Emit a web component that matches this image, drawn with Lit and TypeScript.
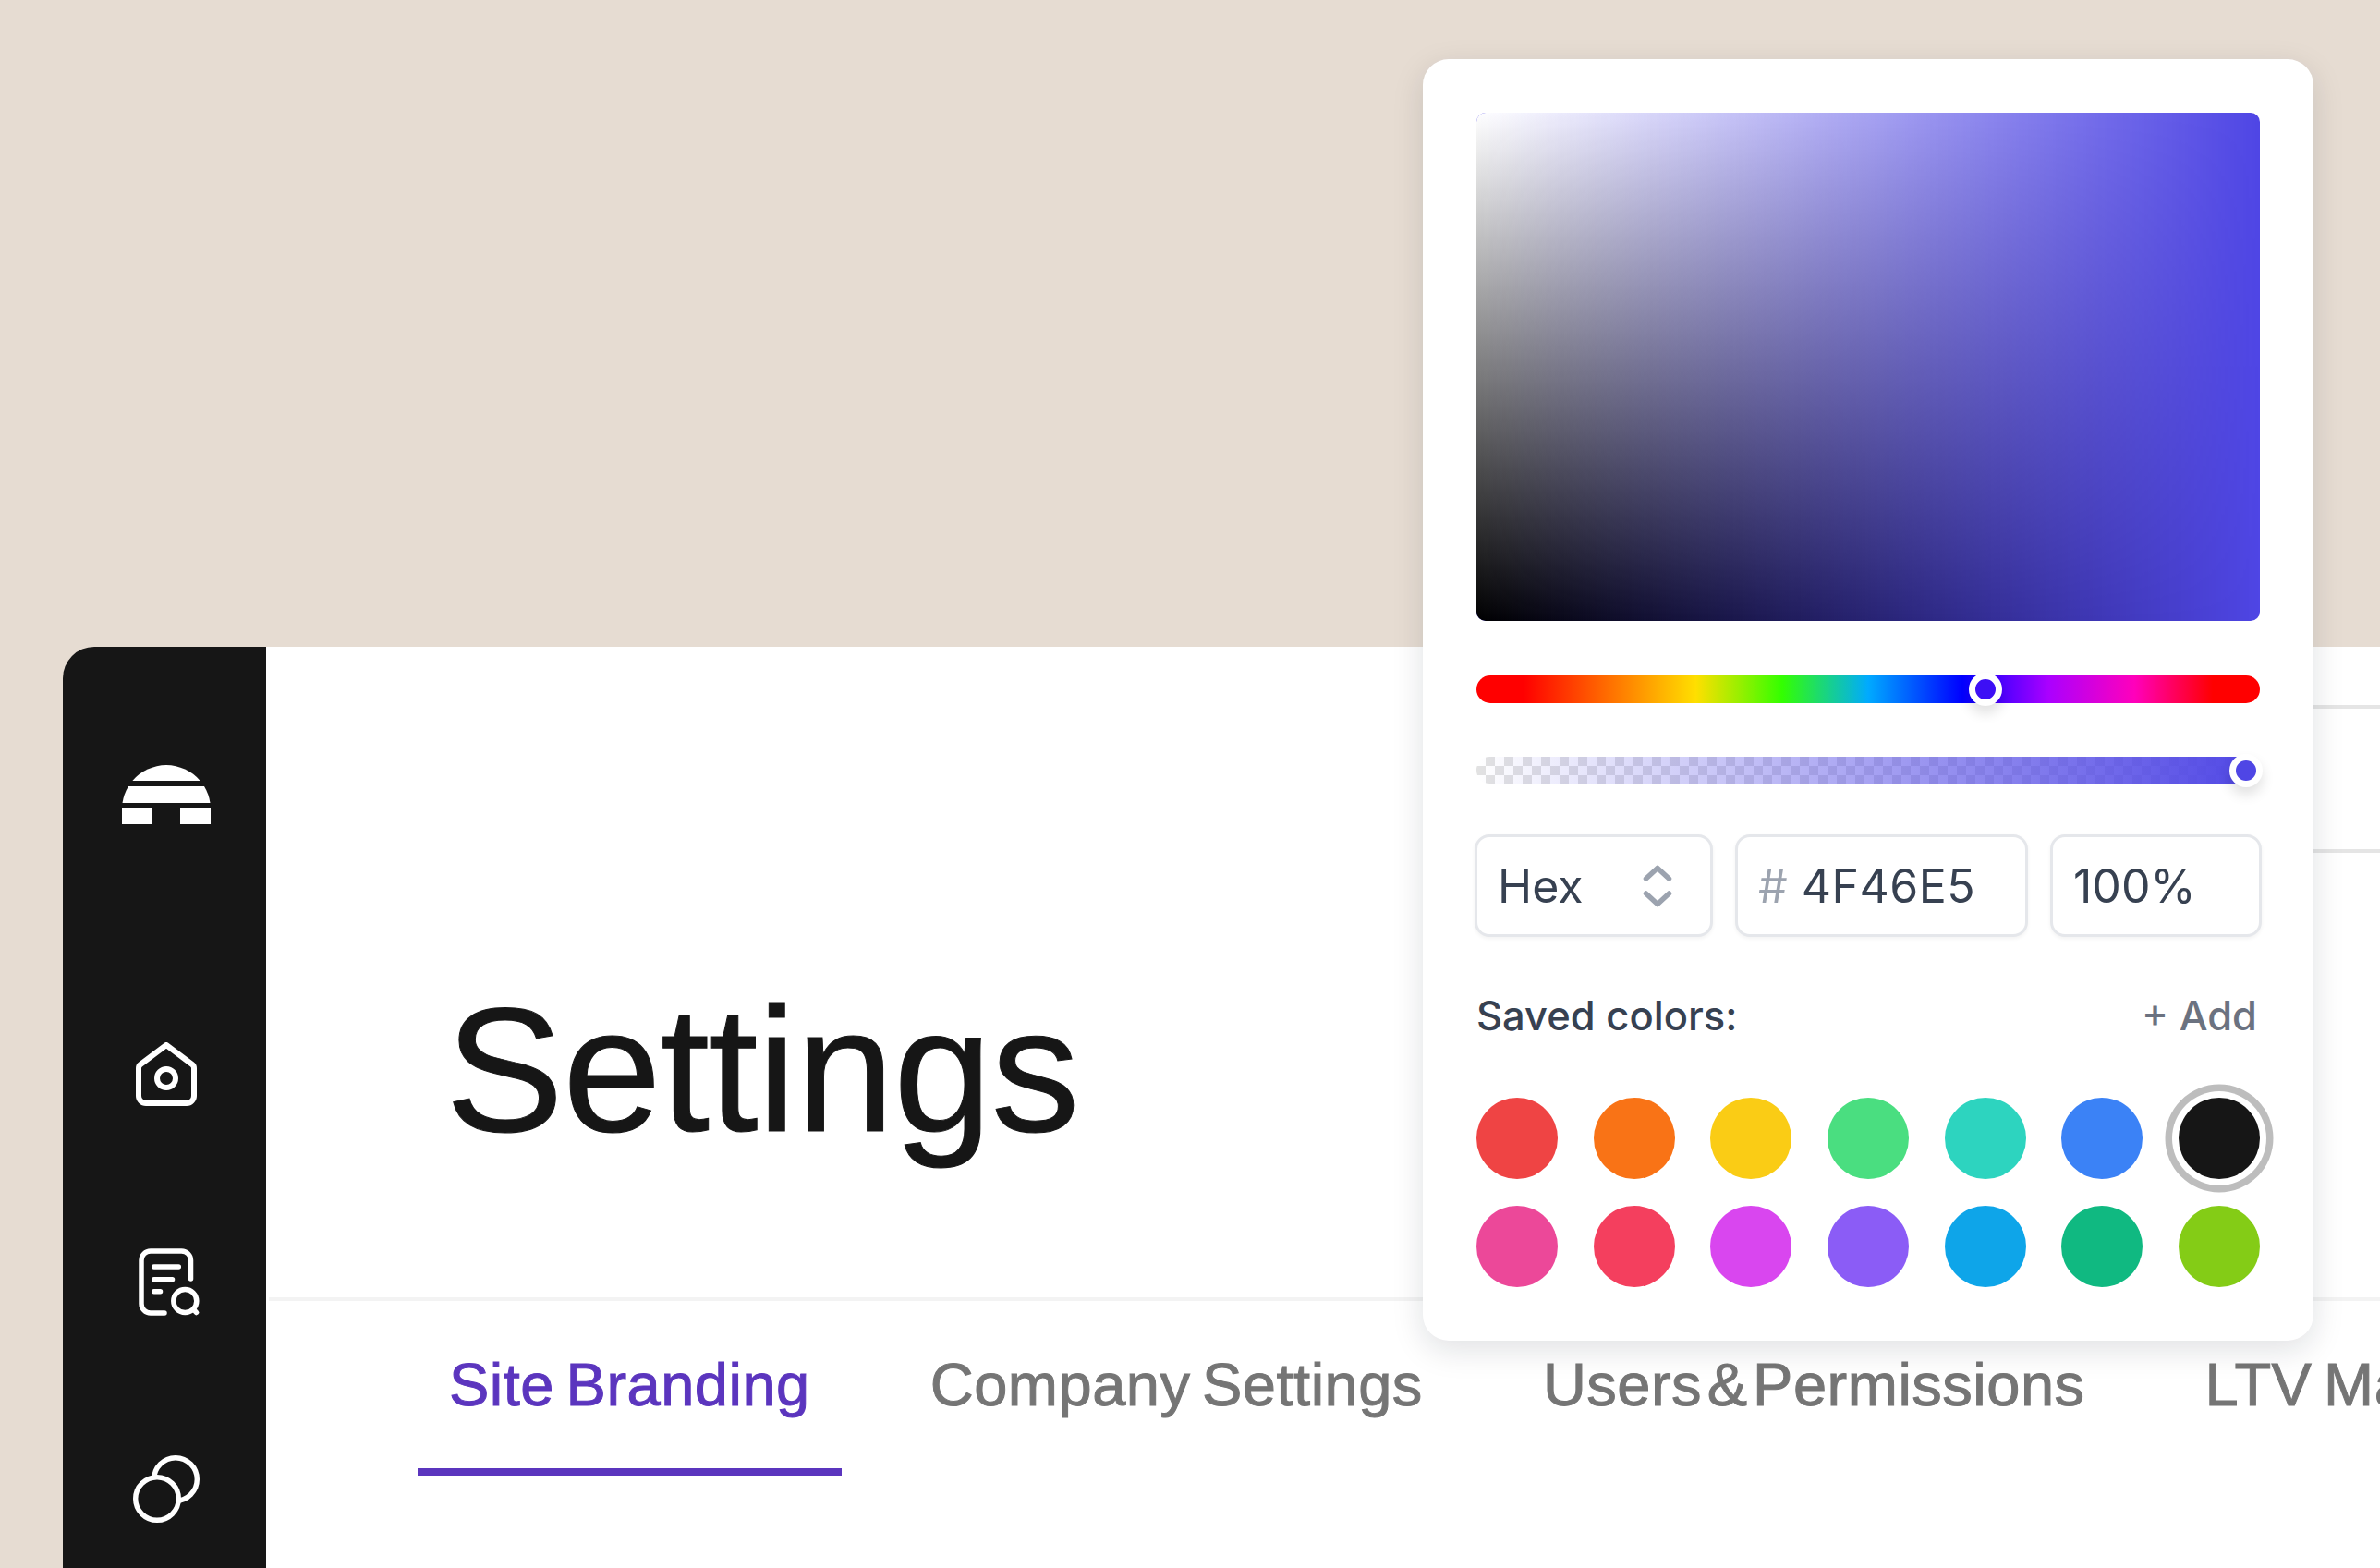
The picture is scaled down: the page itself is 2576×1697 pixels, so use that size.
import { LitElement, html, css } from "lit";
import { customElement } from "lit/decorators.js";

const ROW_COLORS = [
  "#ef4444", "#f97316", "#facc15", "#4ade80", "#2dd4bf", "#3b82f6", "#161616",
  "#ec4899", "#f43f5e", "#d946ef", "#8b5cf6", "#0ea5e9", "#10b981", "#84cc16",
];
const TABS = ["Site Branding", "Company Settings", "Users & Permissions", "LTV Management"];

@customElement("app-root")
export class AppRoot extends LitElement {
  static styles = css`
    :host {
      display: block;
      position: relative;
      width: 2576px;
      height: 1697px;
      overflow: hidden;
      background: #e6dcd2;
      font-family: "Liberation Sans", Arial, sans-serif;
      box-sizing: border-box;
      padding: 700px 0 0 68px;
    }
    * { box-sizing: border-box; }
    .shell { display: flex; height: 997px; }
    .side {
      width: 220px;
      flex: none;
      background: #161616;
      border-top-left-radius: 34px;
      display: flex;
      flex-direction: column;
      align-items: center;
      padding: 128px 0 0 4px;
    }
    .side svg { display: block; flex: none; }
    .logo { margin-bottom: 236px; }
    .home { margin-bottom: 154px; }
    .doc { margin-bottom: 151px; margin-left: 6px; }
    .main { flex: 1; min-width: 0; background: #fff; display: flex; flex-direction: column; overflow: hidden; }
    .head {
      height: 708px;
      flex: none;
      margin-left: 3px;
      border-bottom: 4px solid #f3f3f3;
      display: flex;
      justify-content: space-between;
      align-items: flex-end;
      padding: 0 0 150px 191px;
    }
    h1 {
      margin: 0;
      font-size: 192px;
      line-height: 1;
      font-weight: 400;
      letter-spacing: -1px;
      color: #161616;
      -webkit-text-stroke: 1px currentColor;
    }
    .frag {
      align-self: flex-start;
      width: 300px;
      height: 160px;
      margin-top: 63px;
      margin-bottom: -150px;
      border-top: 4px solid #e5e5e5;
      border-bottom: 4px solid #e5e5e5;
    }
    .tabs { display: flex; gap: 62px; padding-left: 164px; white-space: nowrap; }
    .tab {
      flex: none;
      padding: 58px 34px;
      font-size: 65px;
      line-height: 1;
      letter-spacing: 0.5px;
      word-spacing: -6px;
      color: #757575;
      -webkit-text-stroke: 1px currentColor;
      border-bottom: 8px solid transparent;
    }
    .tab.tight { word-spacing: -13px; }
    .tab.on { color: #5b35be; border-bottom-color: #5b35be; }

    .panel {
      position: absolute;
      left: 1540px;
      top: 64px;
      width: 964px;
      height: 1387px;
      background: #fff;
      border-radius: 28px;
      box-shadow: 0 10px 34px rgba(15, 23, 42, 0.13);
      padding: 58px;
      font-family: Inter, "Liberation Sans", sans-serif;
      display: flex;
      flex-direction: column;
    }
    .sv {
      position: relative;
      height: 550px;
      flex: none;
      border-radius: 10px;
      overflow: hidden;
      background: #4f46e5;
    }
    .sv::after {
      content: "";
      position: absolute;
      inset: 0;
      background: linear-gradient(to bottom, #fff, #000);
      -webkit-mask-image: linear-gradient(to right, #000, transparent);
      mask-image: linear-gradient(to right, #000, transparent);
    }
    .bar { position: relative; height: 30px; flex: none; border-radius: 15px; }
    .hue {
      margin-top: 59px;
      background: linear-gradient(to right, #f00 6%, #ffdf00 28%, #3f0 39%, #0af 50%, #00f 62%, #a0f 73%, #f0b 84%, #f00 94%);
    }
    .alpha {
      margin-top: 58px;
      height: 29px;
      background-image:
        linear-gradient(to right, rgba(79, 70, 229, 0), #4f46e5),
        conic-gradient(#e2e2e2 25%, #fff 0 50%, #e2e2e2 0 75%, #fff 0);
      background-size: 100% 100%, 20px 20px;
      background-position: 0 0, 0 0;
    }
    .thumb {
      position: absolute;
      top: 50%;
      width: 36px;
      height: 36px;
      margin: -18px 0 0 -18px;
      border-radius: 50%;
      border: 7px solid #fff;
      box-shadow: 0 8px 14px rgba(0, 0, 0, 0.12);
    }
    .inputs { display: flex; gap: 24px; margin: 55px -2px 0; }
    .field {
      height: 111px;
      flex: none;
      border: 3px solid #e5e7eb;
      border-radius: 16px;
      box-shadow: 0 2px 4px rgba(0, 0, 0, 0.05);
      display: flex;
      align-items: center;
      font-size: 50px;
      color: #374151;
      padding: 0 0 0 22px;
      background: #fff;
    }
    .f1 { width: 258px; justify-content: space-between; padding-right: 41px; }
    .f2 { width: 317px; gap: 15px; }
    .f2 span:last-child { letter-spacing: 0.5px; }
    .f3 { width: 229px; }
    .hash { color: #9ca3af; }
    .saved {
      display: flex;
      justify-content: space-between;
      align-items: center;
      margin-top: 61px;
      font-size: 43.5px;
      font-weight: 500;
      line-height: 48px;
      color: #374151;
    }
    .add { color: #6b7280; margin-right: 3px; }
    .grid {
      display: grid;
      grid-template-columns: repeat(7, 88px);
      justify-content: space-between;
      row-gap: 29px;
      margin-top: 65px;
    }
    .sw { width: 88px; height: 88px; border-radius: 50%; }
    .sw.sel { box-shadow: 0 0 0 7px #fff, 0 0 0 14.5px #bdbdbd; }
  `;

  render() {
    return html`
      <div class="shell">
        <nav class="side">
          <svg class="logo" width="96" height="64" viewBox="0 0 96 64" fill="#fff">
            <path d="M11.4 17A48 48 0 0 1 84.6 17Z" />
            <path d="M7 23H89A48 48 0 0 1 95.5 41H.5A48 48 0 0 1 7 23Z" />
            <rect x="0" y="47" width="33" height="17" />
            <rect x="63" y="47" width="33" height="17" />
          </svg>
          <svg class="home" width="66" height="69" viewBox="0 0 66 69" fill="none" stroke="#fff" stroke-width="6" stroke-linejoin="round">
            <path d="M33 3 61 24Q63 25.500 63 28V58A8 8 0 0 1 55 66H11A8 8 0 0 1 3 58V28Q3 25.500 5 24Z" />
            <circle cx="33" cy="39" r="10" />
          </svg>
          <svg class="doc" width="66" height="73" viewBox="0 0 66 73" fill="none" stroke="#fff" stroke-width="5.500" stroke-linecap="round">
            <path d="M56.500 33V13A10 10 0 0 0 46.500 3H13A10 10 0 0 0 3 13V60A10 10 0 0 0 13 70H28" />
            <path d="M16.700 20H43.300M16.700 33.700H36.500M16.700 46.700H23.500" />
            <circle cx="50.300" cy="57" r="12.500" />
            <path d="M59.500 66 62.500 69.500" />
          </svg>
          <svg class="circ" width="72" height="73" viewBox="0 0 72 73" stroke="#fff" stroke-width="5.400">
            <circle cx="46" cy="26" r="23.300" fill="none" />
            <circle cx="26" cy="47" r="23.300" fill="#161616" />
          </svg>
        </nav>
        <div class="main">
          <header class="head">
            <h1>Settings</h1>
            <div class="frag"></div>
          </header>
          <div class="tabs">
            ${TABS.map(
              (t, i) => html`<div class="tab ${i === 0 ? "on" : ""} ${i === 2 ? "tight" : ""}">${t}</div>`
            )}
          </div>
        </div>
      </div>
      <section class="panel">
        <div class="sv"></div>
        <div class="bar hue"><div class="thumb" style="left:551px;background:#3d0ff5"></div></div>
        <div class="bar alpha"><div class="thumb" style="left:833px;background:#4f46e5"></div></div>
        <div class="inputs">
          <div class="field f1">
            <span>Hex</span>
            <svg width="32" height="46" viewBox="0 0 32 46" fill="none" stroke="#9ca3af" stroke-width="5.500" stroke-linecap="round" stroke-linejoin="round">
              <path d="M3.500 15 16 3.500 28.500 15M3.500 31 16 42.500 28.500 31" />
            </svg>
          </div>
          <div class="field f2"><span class="hash">#</span><span>4F46E5</span></div>
          <div class="field f3">100%</div>
        </div>
        <div class="saved"><span>Saved colors:</span><span class="add">+ Add</span></div>
        <div class="grid">
          ${ROW_COLORS.map(
            (c, i) => html`<div class="sw ${i === 6 ? "sel" : ""}" style="background:${c}"></div>`
          )}
        </div>
      </section>
    `;
  }
}
